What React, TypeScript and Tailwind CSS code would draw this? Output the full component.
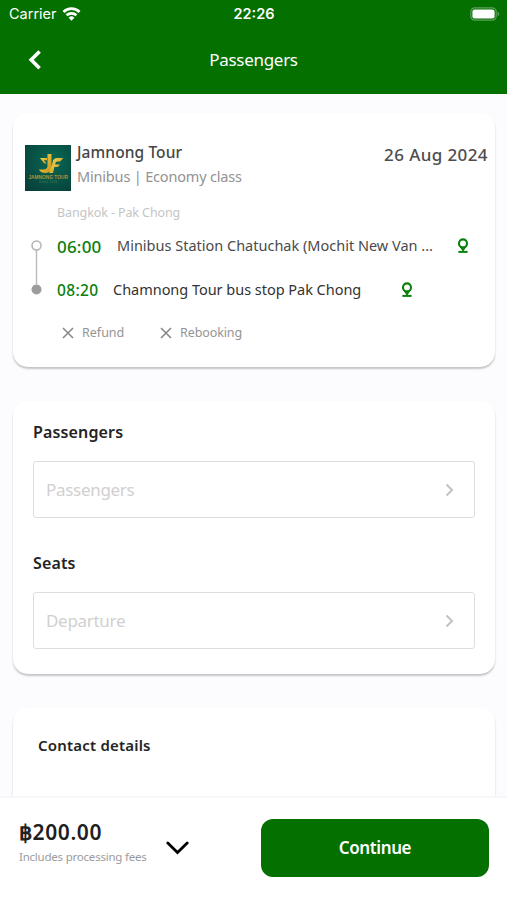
import { ReactNode } from "react";

interface StopProps {
    time: string;
    name: string;
    timeClass: string;
    nameClass: string;
}

function BackIcon() {
    return (
        <svg className="ml-px" width="14" height="20" viewBox="0 0 14 20" fill="none" stroke="white" strokeWidth="3.6">
            <path d="M11.6 1.4 3.2 9.8l8.4 8.4" />
        </svg>
    );
}

function WifiIcon() {
    return (
        <svg width="19" height="14" viewBox="0 0 20 15" fill="none" stroke="white" strokeWidth="2.9">
            <path d="M1.4 5.3a12.2 12.2 0 0 1 17.2 0" />
            <path d="M4.7 8.9a7.6 7.6 0 0 1 10.6 0" />
            <path d="M10 14.6 6.9 11.5a4.4 4.4 0 0 1 6.2 0Z" fill="white" stroke="none" />
        </svg>
    );
}

function BatteryIcon() {
    return (
        <svg width="30" height="14" viewBox="0 0 30 14">
            <rect x="0.8" y="0.8" width="25.4" height="12.4" rx="4" fill="none" stroke="#5da15d" strokeWidth="1.2" />
            <rect x="2.4" y="2.6" width="22.2" height="8.8" rx="2.2" fill="white" />
            <path d="M27.6 4.8c2 .6 2 3.8 0 4.4Z" fill="#5da15d" />
        </svg>
    );
}

function PinIcon() {
    return (
        <svg width="12" height="16" viewBox="0 0 12 16" fill="none" stroke="#0a800a">
            <circle cx="6" cy="5.4" r="4" strokeWidth="2.1" />
            <path d="M2.8 8.4 6 13l3.2-4.6L6 10Z" fill="#0a800a" strokeWidth="1" />
            <path d="M1.4 13.9h9.2" strokeWidth="2" />
        </svg>
    );
}

function CrossIcon() {
    return (
        <svg width="12" height="12" viewBox="0 0 12 12" fill="none" stroke="#858585" strokeWidth="1.5">
            <path d="m1 1 10 10M11 1 1 11" />
        </svg>
    );
}

function OperatorLogo() {
    return (
        <svg width="46" height="46" viewBox="0 0 46 46">
            <defs>
                <radialGradient id="logoBg" cx="0.6" cy="0.35" r="0.8">
                    <stop offset="0" stopColor="#096a55" />
                    <stop offset="1" stopColor="#073f3a" />
                </radialGradient>
                <linearGradient id="logoGold" x1="0" y1="0" x2="1" y2="1">
                    <stop offset="0" stopColor="#f6d64f" />
                    <stop offset="1" stopColor="#c8921f" />
                </linearGradient>
            </defs>
            <rect width="46" height="46" fill="url(#logoBg)" />
            <g fill="url(#logoGold)">
                <path d="M22.5 9h4v13.5c0 3.5-3 5.500-6.500 5.500-3 0-5-1.300-6-3.500h4.500c2.500 0 4-1.200 4-3.500Z" />
                <path d="M15 13h7v2.200h-3.200l3 3.300h-2.600Z" />
                <path d="M27.5 18c0-3.200 2-5 5-5h5.800l-3.200 3.500h-2.300c-1.500 0-2.200.8-2.500 2.300L28 28h-4Z" />
                <path d="M29 19.500h6l-2 2.500h-4Z" />
            </g>
            <text x="3.4" y="34" textLength="39.5" lengthAdjust="spacingAndGlyphs" fontFamily="Liberation Sans" fontSize="5" fontWeight="700" fill="#a8933b">JAMNONG TOUR</text>
            <text x="14" y="38" textLength="18" fontFamily="Liberation Sans" fontSize="2.8" fill="#4d8158">Since 2005</text>
        </svg>
    );
}

function Stop({ time, name, timeClass, nameClass }: StopProps) {
    return (
        <div className="flex h-11 items-center whitespace-nowrap">
            <span className={`pt-px font-medium text-[#0a800a] ${timeClass}`}>{time}</span>
            <span className={nameClass}>{name}</span>
            <PinIcon />
        </div>
    );
}

function Card({ className, children }: { className: string; children: ReactNode }) {
    return (
        <section className={`mr-3 ml-[13px] rounded-[15px] bg-white shadow-[0_2px_2px_rgba(0,0,0,0.22)] ${className}`}>
            {children}
        </section>
    );
}

function SelectField({ label, placeholder }: { label: string; placeholder: string }) {
    return (
        <div>
            <h2 className="h-6 text-base leading-6 font-semibold tracking-[0.15px] text-[#242424]">{label}</h2>
            <button className="mt-[17px] flex h-[57px] w-full items-center justify-between rounded-[3px] border-[1.5px] border-[#dedede] pr-5 pl-3">
                <span className="text-[17px] tracking-[-0.3px] text-[#d0d0d0]">{placeholder}</span>
                <svg width="9" height="14" viewBox="0 0 9 14" fill="none" stroke="#c4c4c4" strokeWidth="2.1">
                    <path d="m1.5 1.5 5.5 5.5-5.5 5.5" />
                </svg>
            </button>
        </div>
    );
}

export default function App() {
    return (
        <div className="flex h-[900px] w-[507px] flex-col overflow-hidden bg-[#fcfcff] font-['Noto_Sans','Open_Sans',sans-serif]">
            <header className="h-[94px] shrink-0 bg-[#047000] text-white">
                <div className="grid h-[27px] grid-cols-3 items-center pr-[7px] pl-[9px] font-[Inter,sans-serif]">
                    <div className="flex items-center gap-[5px] text-[14.5px]">
                        Carrier
                        <WifiIcon />
                    </div>
                    <span className="pr-px text-center text-[14.5px] font-semibold">22:26</span>
                    <div className="flex justify-end">
                        <BatteryIcon />
                    </div>
                </div>
                <div className="grid h-[66px] grid-cols-3 items-center px-[27px]">
                    <BackIcon />
                    <h1 className="text-center text-[17px] tracking-[-0.3px]">Passengers</h1>
                </div>
            </header>

            <main className="min-h-0 flex-1 overflow-hidden pt-[19px]">
                <Card className="h-[254px] pt-7">
                    <div className="flex pr-[7px] pl-3">
                        <div className="mt-1">
                            <OperatorLogo />
                        </div>
                        <div className="ml-1.5 flex-1">
                            <div className="text-[15.5px] leading-[23px] font-medium tracking-[0.1px] text-[#454545]">Jamnong Tour</div>
                            <div className="text-[14.5px] leading-[25px] tracking-[-0.18px] text-[#929292]">Minibus | Economy class</div>
                        </div>
                        <div className="mt-0.5 text-[17px] leading-6 font-medium tracking-[0.4px] text-[#4d4d4d]">26 Aug 2024</div>
                    </div>
                    <div className="mt-3 pl-11 text-[12.5px] leading-5 tracking-[-0.1px] text-[#c5c5c5]">Bangkok - Pak Chong</div>
                    <div className="flex pt-px pl-[18px]">
                        <svg className="-mt-px mr-[15px] shrink-0" width="11" height="89" viewBox="0 0 11 89">
                            <path d="M5.5 27v34" stroke="#bcbcbc" strokeWidth="1.5" />
                            <circle cx="5.5" cy="22.5" r="4.5" fill="white" stroke="#b4b4b4" strokeWidth="1.5" />
                            <circle cx="5.5" cy="66.5" r="5" fill="#9c9c9c" />
                        </svg>
                        <div>
                            <Stop
                                time="06:00"
                                name="Minibus Station Chatuchak (Mochit New Van ..."
                                timeClass="w-[60px] text-[17px] tracking-[0.2px]"
                                nameClass="w-[340px] text-[14.5px] text-[#4a4a4a]"
                            />
                            <Stop
                                time="08:20"
                                name="Chamnong Tour bus stop Pak Chong"
                                timeClass="w-[56px] text-[15.5px] tracking-[0.35px]"
                                nameClass="w-[288px] text-[14.5px] tracking-[-0.03px] text-[#333333]"
                            />
                        </div>
                    </div>
                    <div className="mt-[11px] flex items-center pl-[49px] text-[12.5px] leading-5 text-[#949494]">
                        <CrossIcon />
                        <span className="ml-2 w-[78px]">Refund</span>
                        <CrossIcon />
                        <span className="ml-2 tracking-[-0.1px]">Rebooking</span>
                    </div>
                </Card>

                <Card className="mt-[34px] flex h-[273px] flex-col gap-[33px] px-5 pt-[19px]">
                    <SelectField label="Passengers" placeholder="Passengers" />
                    <SelectField label="Seats" placeholder="Departure" />
                </Card>

                <Card className="mt-[34px] h-[140px] px-[25px] pt-[25px]">
                    <h2 className="text-[15px] leading-6 font-semibold tracking-[0.2px] text-[#242424]">Contact details</h2>
                </Card>
            </main>

            <footer className="z-10 flex h-[104px] shrink-0 items-start border-t-2 border-[#f7f7f9] bg-white pt-[21px] pr-[18px] pl-[19px]">
                <div className="-mt-px w-[147px]">
                    <div className="text-[21px] leading-7 font-semibold tracking-[0.6px] text-[#202020]">฿200.00</div>
                    <div className="pt-px text-[11.5px] leading-5 tracking-[-0.22px] whitespace-nowrap text-[#9b9b9b]">Includes processing fees</div>
                </div>
                <svg className="mt-[22px]" width="23" height="15" viewBox="0 0 23 15" fill="none" stroke="black" strokeWidth="2.8" strokeLinecap="round">
                    <path d="m1.8 2 9.7 9.5L21.2 2" />
                </svg>
                <button className="ml-auto h-[58px] w-[228px] rounded-[12px] bg-[#047000] text-[17px] font-semibold tracking-[-0.4px] text-white">Continue</button>
            </footer>
        </div>
    );
}
